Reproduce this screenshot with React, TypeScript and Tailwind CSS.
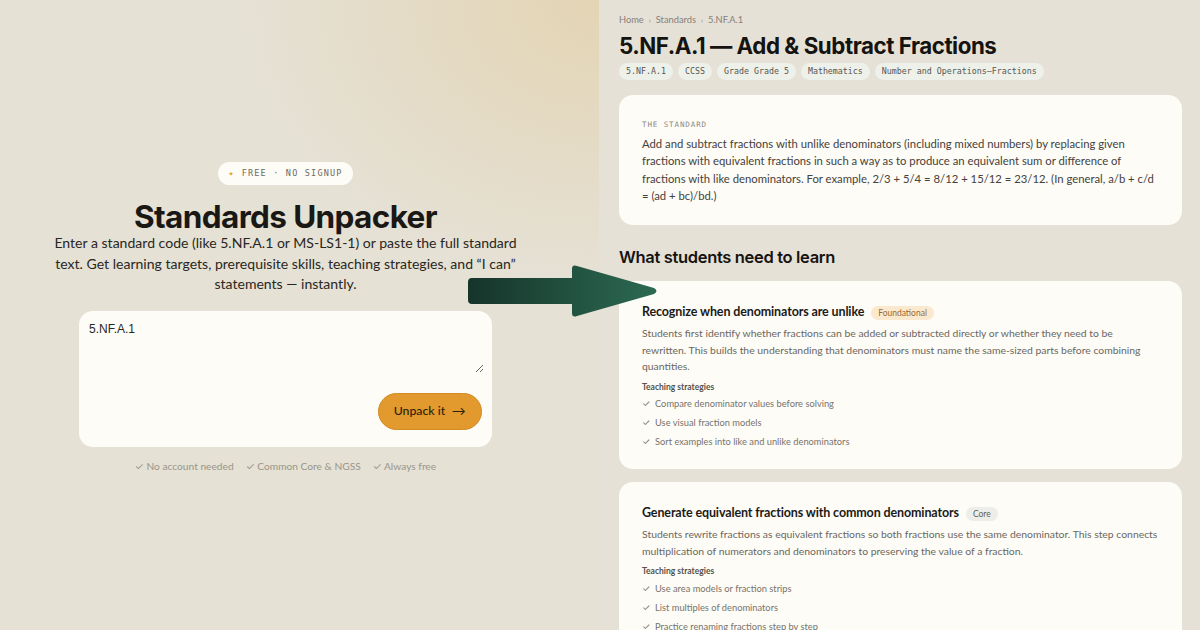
import React from 'react'

const sans = "font-['Lato','Inter',sans-serif]"
const display = "font-['Inter','Lato',sans-serif]"
const mono = "font-['DejaVu_Sans_Mono','Liberation_Mono',monospace]"

const tags = ['5.NF.A.1', 'CCSS', 'Grade Grade 5', 'Mathematics', 'Number and Operations—Fractions']

const targets = [
  {
    title: 'Recognize when denominators are unlike',
    badge: 'Foundational',
    badgeClass: 'bg-[#fbe9cf] text-[#9a6a37]',
    body: 'Students first identify whether fractions can be added or subtracted directly or whether they need to be rewritten. This builds the understanding that denominators must name the same-sized parts before combining quantities.',
    strategies: [
      'Compare denominator values before solving',
      'Use visual fraction models',
      'Sort examples into like and unlike denominators',
    ],
  },
  {
    title: 'Generate equivalent fractions with common denominators',
    badge: 'Core',
    badgeClass: 'bg-[#edeee9] text-[#5d625c]',
    body: 'Students rewrite fractions as equivalent fractions so both fractions use the same denominator. This step connects multiplication of numerators and denominators to preserving the value of a fraction.',
    strategies: [
      'Use area models or fraction strips',
      'List multiples of denominators',
      'Practice renaming fractions step by step',
    ],
  },
]

function Arrow() {
  return (
    <svg
      className="absolute left-[466px] top-[263px] pointer-events-none"
      width="194"
      height="56"
      viewBox="0 0 194 56"
    >
      <defs>
        <linearGradient id="arrowFill" x1="0" y1="0" x2="1" y2="0">
          <stop offset="0%" stopColor="#16342a" />
          <stop offset="100%" stopColor="#2c6a52" />
        </linearGradient>
      </defs>
      <path
        d="M6 15 H106 V6 Q106 1 111 3 L188 25 Q193 28 188 31 L111 53 Q106 55 106 50 V41 H6 Q2 41 2 37 V19 Q2 15 6 15 Z"
        fill="url(#arrowFill)"
      />
    </svg>
  )
}

function TargetCard({ t }: { t: (typeof targets)[number] }) {
  return (
    <div className="w-[563px] rounded-[14px] bg-[#fdfcf7] px-[23px] pt-[22px] pb-[20px]">
      <div className="flex items-center gap-[7px]">
        <h3 className="text-[12.5px] font-bold text-[#1c1a17] tracking-[-0.01em]">{t.title}</h3>
        <span className={`rounded-full px-[7px] py-[2px] text-[8.5px] leading-[10px] ${t.badgeClass}`}>
          {t.badge}
        </span>
      </div>
      <p className="mt-[3px] text-[10.4px] leading-[16.5px] text-[#6b6760]">{t.body}</p>
      <div className="mt-[6px] text-[8.5px] font-bold text-[#55514a]">Teaching strategies</div>
      <ul className="mt-[4px] flex flex-col gap-[5px]">
        {t.strategies.map((s) => (
          <li key={s} className="flex items-center gap-[6px] text-[9.3px] leading-[14px] text-[#77736b]">
            <span className="w-[7px]">✓</span>
            <span>{s}</span>
          </li>
        ))}
      </ul>
    </div>
  )
}

export default function App() {
  return (
    <div className={`relative flex h-[630px] w-[1200px] overflow-hidden bg-[#e5e1d5] ${sans}`}>
      {/* Left: unpacker form */}
      <section className="flex h-full w-[599px] flex-col items-center bg-[radial-gradient(ellipse_60%_45%_at_100%_0%,rgba(227,210,174,0.85),rgba(229,225,213,0))] pr-[28px] pt-[162px]">
        <div className={`flex h-[23px] items-center gap-[7px] rounded-full bg-[#fdfcf6] px-[10px] text-[8.5px] tracking-[0.14em] text-[#6f6a60] ${mono}`}>
          <span className="text-[#e0962c]">✦</span>
          <span>FREE · NO SIGNUP</span>
        </div>
        <h1 className={`mt-[15px] text-[31.5px] font-bold leading-[34px] tracking-[-0.02em] text-[#1a1814] ${display}`}>
          Standards Unpacker
        </h1>
        <p className="mt-[-1px] text-center text-[14.05px] leading-[20.5px] text-[#2a2722]">
          Enter a standard code (like 5.NF.A.1 or MS-LS1-1) or paste the full standard
          <br />
          text. Get learning targets, prerequisite skills, teaching strategies, and “I can”
          <br />
          statements — instantly.
        </p>
        <div className="mt-[16px] w-[413px] rounded-[14px] bg-[#fdfcf6] px-[8px] pt-[6px] pb-[17px]">
          <textarea
            defaultValue="5.NF.A.1"
            className="block h-[56px] w-full bg-transparent px-[2px] pt-[3px] text-[12px] text-[#2a2722] outline-none font-['Liberation_Sans',sans-serif]"
          />
          <div className="mt-[20px] flex justify-end pr-[2px]">
            <button className="flex h-[37px] items-center gap-[6px] rounded-full border border-[#d38c24] bg-[#e2992d] px-[15px] text-[12.3px] font-medium text-[#2a1e0c]">
              <span>Unpack it</span>
              <span className="text-[11px]">⟶</span>
            </button>
          </div>
        </div>
        <div className="mt-[12px] flex gap-[12px] text-[10.2px] text-[#9a958b]">
          <span>✓ No account needed</span>
          <span>✓ Common Core &amp; NGSS</span>
          <span>✓ Always free</span>
        </div>
      </section>

      {/* Right: result preview */}
      <section className="flex-1 bg-[#e6e1d6] pl-[20px] pt-[13px]">
        <nav className="flex items-center gap-[5px] text-[9.3px] text-[#85807a]">
          <span>Home</span>
          <span className="text-[7px]">›</span>
          <span>Standards</span>
          <span className="text-[7px]">›</span>
          <span>5.NF.A.1</span>
        </nav>
        <h2 className={`mt-[5px] text-[22.3px] font-bold leading-[28px] tracking-[-0.02em] text-[#15130f] ${display}`}>
          5.NF.A.1 — Add &amp; Subtract Fractions
        </h2>
        <div className="mt-[3px] flex gap-[5px]">
          {tags.map((t) => (
            <span
              key={t}
              className={`flex h-[17px] items-center rounded-full bg-[#eef0ea] px-[7px] text-[8.3px] text-[#57554f] ${mono}`}
            >
              {t}
            </span>
          ))}
        </div>

        <div className="mt-[15px] w-[563px] rounded-[14px] bg-[#fdfcf7] px-[23px] pt-[24px] pb-[21px]">
          <div className={`text-[7.5px] tracking-[0.12em] text-[#8d8980] ${mono}`}>THE STANDARD</div>
          <p className="mt-[5px] text-[11.3px] leading-[17.3px] text-[#45413b]">
            Add and subtract fractions with unlike denominators (including mixed numbers) by replacing given fractions
            with equivalent fractions in such a way as to produce an equivalent sum or difference of fractions with like
            denominators. For example, 2/3 + 5/4 = 8/12 + 15/12 = 23/12. (In general, a/b + c/d = (ad + bc)/bd.)
          </p>
        </div>

        <h2 className={`mt-[22px] text-[16.5px] font-semibold leading-[20px] tracking-[-0.02em] text-[#15130f] ${display}`}>
          What students need to learn
        </h2>

        <div className="mt-[14px] flex flex-col gap-[13px]">
          {targets.map((t) => (
            <TargetCard key={t.title} t={t} />
          ))}
        </div>
      </section>

      <Arrow />
    </div>
  )
}
